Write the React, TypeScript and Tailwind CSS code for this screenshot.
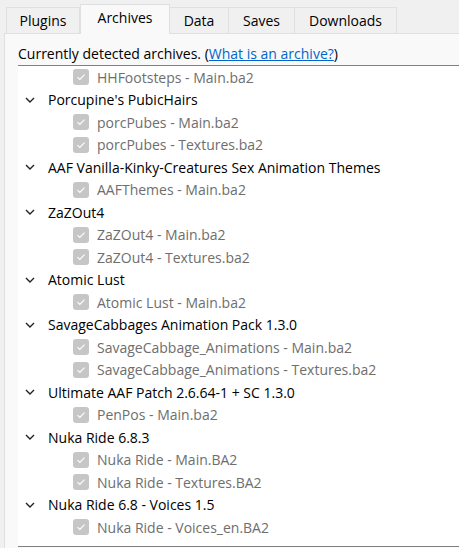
import { ReactNode } from 'react'

type Node = { name: string; files: string[] }

// first entry is a leftover child of the group scrolled above the top edge
const TOP_FILES = ['HHFootsteps - Main.ba2']

const GROUPS: Node[] = [
  { name: "Porcupine's PubicHairs", files: ['porcPubes - Main.ba2', 'porcPubes - Textures.ba2'] },
  { name: 'AAF Vanilla-Kinky-Creatures Sex Animation Themes', files: ['AAFThemes - Main.ba2'] },
  { name: 'ZaZOut4', files: ['ZaZOut4 - Main.ba2', 'ZaZOut4 - Textures.ba2'] },
  { name: 'Atomic Lust', files: ['Atomic Lust - Main.ba2'] },
  {
    name: 'SavageCabbages Animation Pack 1.3.0',
    files: ['SavageCabbage_Animations - Main.ba2', 'SavageCabbage_Animations - Textures.ba2'],
  },
  { name: 'Ultimate AAF Patch 2.6.64-1 + SC 1.3.0', files: ['PenPos - Main.ba2'] },
  { name: 'Nuka Ride 6.8.3', files: ['Nuka Ride - Main.BA2', 'Nuka Ride - Textures.BA2'] },
  { name: 'Nuka Ride 6.8 - Voices 1.5', files: ['Nuka Ride - Voices_en.BA2'] },
]

const TABS = ['Plugins', 'Archives', 'Data', 'Saves', 'Downloads']
const TAB_W: Record<string, string> = {
  Plugins: 'w-[74px]',
  Archives: 'w-[90px]',
  Data: 'w-[60px]',
  Saves: 'w-[67px]',
  Downloads: 'w-[103px]',
}

function Chevron() {
  return (
    <svg width="10" height="6" viewBox="0 0 10 6" className="block">
      <path d="M1 1 L5 5 L9 1" fill="none" stroke="#222" strokeWidth="1.4" />
    </svg>
  )
}

function Check() {
  return (
    <span className="flex h-4 w-4 items-center justify-center rounded-[3px] bg-[#c6c6c6]">
      <svg width="10" height="8" viewBox="0 0 10 8">
        <path d="M1.5 4.2 L3.8 6.4 L8.5 1.6" fill="none" stroke="#fff" strokeWidth="1.1" />
      </svg>
    </span>
  )
}

function Row({ children }: { children: ReactNode }) {
  return <div className="flex h-[22.5px] items-center whitespace-nowrap">{children}</div>
}

function FileRow({ name }: { name: string }) {
  return (
    <Row>
      <span className="ml-[55px] mr-2">
        <Check />
      </span>
      <span className="text-[#6e6e6e]">{name}</span>
    </Row>
  )
}

export default function App() {
  return (
    <div
      className="h-[548px] w-[459px] overflow-hidden bg-[#f0f0f0] text-[14px] text-black"
      style={{ fontFamily: '"Open Sans", "Noto Sans", sans-serif' }}
    >
      <div className="flex h-[33px] items-end pl-[6px]">
        {TABS.map(t =>
          t === 'Archives' ? (
            <div
              key={t}
              className={`${TAB_W[t]} relative z-10 -mb-px flex h-[30px] items-center justify-center border border-b-0 border-[#e0e0e0] bg-[#f9f9f9] pb-[4px]`}
            >
              {t}
            </div>
          ) : (
            <div
              key={t}
              className={`${TAB_W[t]} -ml-px flex h-[26px] items-center justify-center border border-b-0 border-[#e0e0e0] bg-[#f0f0f0] first:ml-0`}
            >
              {t}
            </div>
          )
        )}
      </div>

      <div className="ml-[4px] h-[515px] border-l border-t border-[#e0e0e0] bg-[#f9f9f9] pl-[13px]">
        <div className="flex h-[31px] items-center whitespace-nowrap pt-[7px]">
          Currently detected archives. (<span className="text-[#0066cc] underline">What is an archive?</span>)
        </div>

        <div className="h-[482px] border-y border-[#808080] bg-white">
          {TOP_FILES.map(f => (
            <FileRow key={f} name={f} />
          ))}
          {GROUPS.map(g => (
            <div key={g.name}>
              <Row>
                <span className="ml-[7px] mr-[13px]">
                  <Chevron />
                </span>
                <span>{g.name}</span>
              </Row>
              {g.files.map(f => (
                <FileRow key={f} name={f} />
              ))}
            </div>
          ))}
        </div>
      </div>
    </div>
  )
}
